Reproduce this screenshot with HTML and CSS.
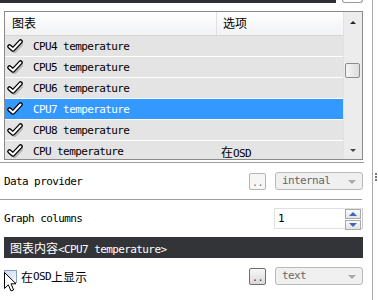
FILE: index.html
```html
<!DOCTYPE html>
<html lang="zh">
<head>
  <meta charset="UTF-8" />
  <title>Graph settings</title>
  <link rel="stylesheet" href="styles.css">
</head>
<body>
  <div class="panel">
    <div class="top">
      <div class="top-dark"></div>
      <div class="top-btn"></div>
    </div>

    <div class="list">
      <div class="list-main">
        <div class="list-head">
          <div class="col-name zh">图表</div>
          <div class="col-opt zh">选项</div>
        </div>
        <div class="row">
          <span class="check"><svg width="16" height="14" viewBox="0 0 16 14"><path d="M3 8 L6.5 11 L14 3" transform="translate(1 1)" fill="none" stroke="#999" stroke-opacity="0.6" stroke-width="4.5" stroke-linecap="round" stroke-linejoin="round"/><path d="M2.5 7.5 L6 10.5 L13.5 2.5" fill="none" stroke="#000" stroke-width="4.5" stroke-linecap="round" stroke-linejoin="round"/><path d="M2.5 7.5 L6 10.5 L13.5 2.5" fill="none" stroke="#fff" stroke-width="2" stroke-linecap="round" stroke-linejoin="round"/></svg></span>
          <span class="name">CPU4 temperature</span><span class="opt"></span>
        </div>
        <div class="row">
          <span class="check"><svg width="16" height="14" viewBox="0 0 16 14"><path d="M3 8 L6.5 11 L14 3" transform="translate(1 1)" fill="none" stroke="#999" stroke-opacity="0.6" stroke-width="4.5" stroke-linecap="round" stroke-linejoin="round"/><path d="M2.5 7.5 L6 10.5 L13.5 2.5" fill="none" stroke="#000" stroke-width="4.5" stroke-linecap="round" stroke-linejoin="round"/><path d="M2.5 7.5 L6 10.5 L13.5 2.5" fill="none" stroke="#fff" stroke-width="2" stroke-linecap="round" stroke-linejoin="round"/></svg></span>
          <span class="name">CPU5 temperature</span><span class="opt"></span>
        </div>
        <div class="row">
          <span class="check"><svg width="16" height="14" viewBox="0 0 16 14"><path d="M3 8 L6.5 11 L14 3" transform="translate(1 1)" fill="none" stroke="#999" stroke-opacity="0.6" stroke-width="4.5" stroke-linecap="round" stroke-linejoin="round"/><path d="M2.5 7.5 L6 10.5 L13.5 2.5" fill="none" stroke="#000" stroke-width="4.5" stroke-linecap="round" stroke-linejoin="round"/><path d="M2.5 7.5 L6 10.5 L13.5 2.5" fill="none" stroke="#fff" stroke-width="2" stroke-linecap="round" stroke-linejoin="round"/></svg></span>
          <span class="name">CPU6 temperature</span><span class="opt"></span>
        </div>
        <div class="row selected">
          <span class="check"><svg width="16" height="14" viewBox="0 0 16 14"><path d="M2.5 7.5 L6 10.5 L13.5 2.5" fill="none" stroke="#000" stroke-width="4.5" stroke-linecap="round" stroke-linejoin="round"/><path d="M2.5 7.5 L6 10.5 L13.5 2.5" fill="none" stroke="#fff" stroke-width="2" stroke-linecap="round" stroke-linejoin="round"/></svg></span>
          <span class="name">CPU7 temperature</span><span class="opt"></span>
        </div>
        <div class="row">
          <span class="check"><svg width="16" height="14" viewBox="0 0 16 14"><path d="M3 8 L6.5 11 L14 3" transform="translate(1 1)" fill="none" stroke="#999" stroke-opacity="0.6" stroke-width="4.5" stroke-linecap="round" stroke-linejoin="round"/><path d="M2.5 7.5 L6 10.5 L13.5 2.5" fill="none" stroke="#000" stroke-width="4.5" stroke-linecap="round" stroke-linejoin="round"/><path d="M2.5 7.5 L6 10.5 L13.5 2.5" fill="none" stroke="#fff" stroke-width="2" stroke-linecap="round" stroke-linejoin="round"/></svg></span>
          <span class="name">CPU8 temperature</span><span class="opt"></span>
        </div>
        <div class="row">
          <span class="check"><svg width="16" height="14" viewBox="0 0 16 14"><path d="M3 8 L6.5 11 L14 3" transform="translate(1 1)" fill="none" stroke="#999" stroke-opacity="0.6" stroke-width="4.5" stroke-linecap="round" stroke-linejoin="round"/><path d="M2.5 7.5 L6 10.5 L13.5 2.5" fill="none" stroke="#000" stroke-width="4.5" stroke-linecap="round" stroke-linejoin="round"/><path d="M2.5 7.5 L6 10.5 L13.5 2.5" fill="none" stroke="#fff" stroke-width="2" stroke-linecap="round" stroke-linejoin="round"/></svg></span>
          <span class="name">CPU temperature</span><span class="opt"><span class="zh">在</span>OSD</span>
        </div>
      </div>
      <div class="vscroll">
        <span class="arrow up"></span>
        <span class="thumb"></span>
        <span class="arrow down"></span>
      </div>
    </div>

    <div class="line"></div>
    <div class="field">
      <span class="label">Data provider</span>
      <div class="controls">
        <span class="dots">..</span>
        <span class="combo">internal<i class="caret"></i></span>
      </div>
    </div>

    <div class="line short"></div>
    <div class="field tall">
      <span class="label">Graph columns</span>
      <div class="controls">
        <span class="spin">1
          <span class="spin-btns">
            <span class="spin-btn"><i class="tri-up"></i></span>
            <span class="spin-btn"><i class="tri-down"></i></span>
          </span>
        </span>
      </div>
    </div>

    <div class="section"><span class="zh">图表内容</span>&lt;CPU7 temperature&gt;</div>

    <div class="field">
      <label class="label check-label"><span class="box"></span><span class="zh">在</span>OSD<span class="zh">上显示</span></label>
      <div class="controls">
        <span class="dots pressed">..</span>
        <span class="combo">text<i class="caret"></i></span>
      </div>
    </div>

    <div class="field">
      <span class="label"></span>
      <div class="controls">
        <span class="combo"></span>
      </div>
    </div>

    <svg class="cursor" width="13" height="21" viewBox="0 0 13 21"><path d="M0.5 0.5 L0.5 16.5 L4.3 12.8 L7 19 L9.6 17.9 L7 11.8 L12 11.8 Z" fill="#fff" stroke="#000" stroke-width="1" stroke-linejoin="miter"/></svg>
  </div>
  <div class="grip"><i></i><i></i><i></i></div>
</body>
</html>
```

FILE: styles.css
```css
body {
  margin: 0;
  display: flex;
  background: #fff;
  font-family: "DejaVu Sans Mono", "Noto Sans CJK SC", monospace;
  font-size: 11px;
  letter-spacing: -0.6px;
  color: #000;
}

.zh {
  font-family: "Noto Sans CJK SC", sans-serif;
  font-size: 12px;
  letter-spacing: 0;
}

.panel {
  position: relative;
  width: 372px;
  height: 300px;
  border-right: 1px solid #a9a9a9;
  overflow: hidden;
}

.top {
  display: flex;
  height: 3px;
}

.top-dark {
  width: 336px;
  background: #2e2f33;
}

.top-btn {
  width: 19px;
  margin-left: 6px;
  border: 1px solid #9a9a9a;
  border-top: none;
  border-radius: 0 0 3px 3px;
}

/* list */
.list {
  display: flex;
  margin: 8px 0 0 4px;
  width: 359px;
  height: 149px;
  box-sizing: border-box;
  border: 1px solid #8a8a8a;
  overflow: hidden;
}

.list-main {
  width: 339px;
}

.list-head {
  display: flex;
  height: 23px;
  border-bottom: 1px solid #d6d6d6;
  background: linear-gradient(#ffffff, #f1f2f4);
}

.list-head .col-name {
  width: 204px;
  padding-left: 7px;
  line-height: 22px;
  border-right: 1px solid #e1e1e1;
}

.list-head .col-opt {
  padding-left: 6px;
  line-height: 22px;
}

.row {
  display: flex;
  align-items: center;
  height: 20px;
  border-bottom: 1px solid #fff;
  background: #e4e4e4;
}

.row.selected {
  background: #3399ff;
  color: #fff;
}

.check {
  display: flex;
  width: 16px;
  margin: 0 10px 0 2px;
}

.name {
  width: 177px;
}

.opt {
  padding-left: 11px;
}

.vscroll {
  position: relative;
  width: 18px;
  background: #ececec;
  border-left: 1px solid #e2e2e2;
}

.arrow {
  position: absolute;
  left: 6px;
  border-left: 3px solid transparent;
  border-right: 3px solid transparent;
}

.arrow.up {
  top: 9px;
  border-bottom: 3px solid #222;
}

.arrow.down {
  top: 137px;
  border-top: 3px solid #444;
}

.thumb {
  position: absolute;
  left: 1px;
  top: 51px;
  width: 13px;
  height: 13px;
  border: 1px solid #8c8c8c;
  border-radius: 2px;
  background: linear-gradient(90deg, #f6f6f6, #dcdcdc);
}

/* form */
.line {
  margin-top: 2px;
  width: 364px;
  height: 1px;
  background: #9d9d9d;
}

.line.short {
  margin-top: 0;
  width: 362px;
}

.field {
  display: flex;
  align-items: center;
  justify-content: space-between;
  margin-left: 4px;
  width: 359px;
  height: 36px;
}

.field.tall {
  height: 37px;
}

.controls {
  display: flex;
  align-items: center;
  gap: 9px;
}

.dots {
  width: 15px;
  height: 15px;
  border: 1px solid #b4b4b4;
  border-radius: 2px;
  background: #f6f6f6;
  color: #777;
  font-size: 10px;
  text-align: center;
  line-height: 17px;
}

.dots.pressed {
  border-color: #6f6f6f;
  background: linear-gradient(#f7f7f7, #dadada);
  color: #333;
}

.combo {
  position: relative;
  width: 80px;
  height: 16px;
  padding-left: 6px;
  border: 1px solid #b9b9b9;
  border-radius: 3px;
  background: #f0f0f0;
  color: #666;
  line-height: 16px;
}

.caret {
  position: absolute;
  right: 6px;
  top: 7px;
  border-left: 4px solid transparent;
  border-right: 4px solid transparent;
  border-top: 4px solid #a8a8a8;
}

.spin {
  position: relative;
  width: 84px;
  height: 19px;
  padding-left: 3px;
  border: 1px solid #e0e0e0;
  border-right-color: #c8c8c8;
  background: #fff;
  line-height: 19px;
}

.spin-btns {
  position: absolute;
  right: 1px;
  top: 0;
  display: flex;
  flex-direction: column;
  gap: 1px;
}

.spin-btn {
  display: flex;
  justify-content: center;
  align-items: center;
  width: 14px;
  height: 8px;
  border: 1px solid #a9a9a9;
  background: linear-gradient(#fafafa, #e3e3e3);
}

.tri-up {
  border-left: 4px solid transparent;
  border-right: 4px solid transparent;
  border-bottom: 4px solid #3f68b8;
}

.tri-down {
  border-left: 4px solid transparent;
  border-right: 4px solid transparent;
  border-top: 4px solid #3f68b8;
}

.section {
  margin-left: 4px;
  width: 353px;
  height: 21px;
  padding-left: 6px;
  background: #333438;
  color: #fff;
  line-height: 21px;
}

.check-label {
  display: flex;
  align-items: center;
}

.box {
  width: 11px;
  height: 11px;
  margin-right: 4px;
  border: 1px solid #8a9fbd;
  background: linear-gradient(135deg, #c9daf0, #f4f8fd);
}

.cursor {
  position: absolute;
  left: 4px;
  top: 272px;
}

.grip {
  display: flex;
  flex-direction: column;
  gap: 1px;
  margin: 173px 0 0 2px;
}

.grip i {
  width: 2px;
  height: 2px;
  background: #777;
}
```
